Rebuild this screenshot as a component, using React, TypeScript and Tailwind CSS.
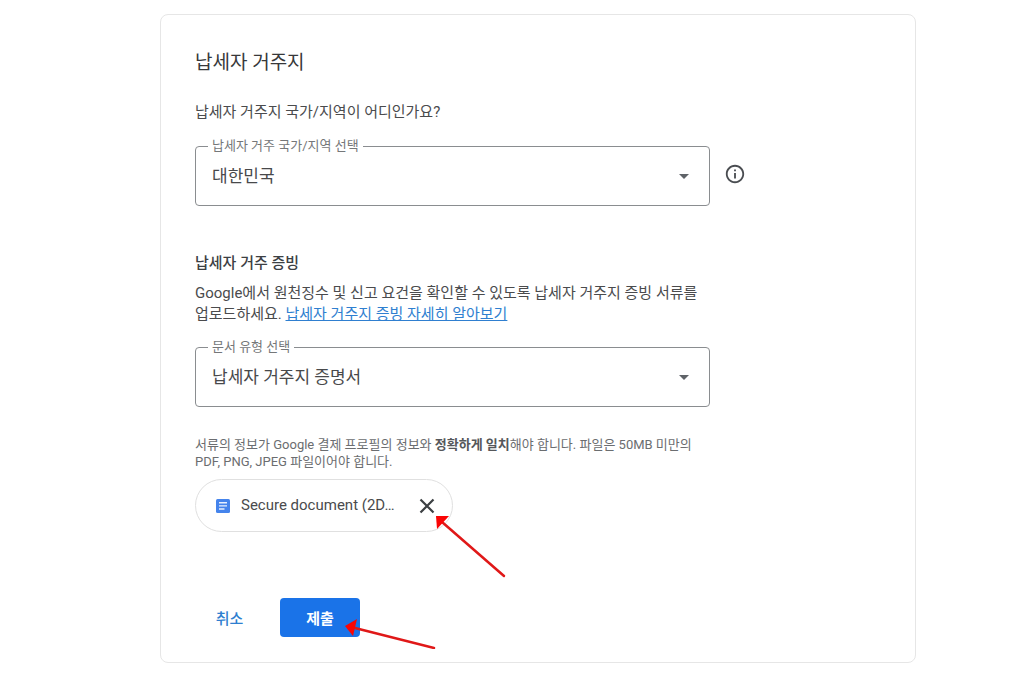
import { useState } from "react"
import type { ReactNode } from "react"

type SelectFieldProps = {
  id: string
  label: string
  options: string[]
}

function SelectField({ id, label, options }: SelectFieldProps) {
  const [value, setValue] = useState(options[0])

  return (
    <fieldset className="min-w-0 rounded border border-[#8a8d90]">
      <legend className="ml-3 px-1 text-[13px] leading-5 text-[#757779]">
        <label htmlFor={id}>{label}</label>
      </legend>
      <div className="grid h-[49px] pb-[9px]">
        <select
          id={id}
          value={value}
          onChange={(e) => setValue(e.target.value)}
          className="col-start-1 row-start-1 h-10 w-full appearance-none bg-transparent pt-0.5 pr-12 pl-4 text-[17px] text-[#48494b] outline-none"
        >
          {options.map((option) => (
            <option key={option}>{option}</option>
          ))}
        </select>
        <svg
          viewBox="0 0 10 5"
          className="pointer-events-none col-start-1 row-start-1 mr-5 h-[5px] w-[10px] self-center justify-self-end"
          aria-hidden="true"
        >
          <path d="M0 0h10L5 5z" fill="#5f6368" />
        </svg>
      </div>
    </fieldset>
  )
}

function FieldRow({ children }: { children: ReactNode }) {
  return <div className="flex items-center gap-[14px]">{children}</div>
}

function InfoIcon() {
  return (
    <svg viewBox="0 0 24 24" className="size-[22px]" fill="#4a4d51" aria-hidden="true">
      <path d="M11 7h2v2h-2zm0 4h2v6h-2zm1-9C6.480 2 2 6.480 2 12s4.480 10 10 10 10-4.480 10-10S17.520 2 12 2zm0 18c-4.410 0-8-3.590-8-8s3.590-8 8-8 8 3.590 8 8-3.590 8-8 8z" />
    </svg>
  )
}

function DocIcon() {
  return (
    <svg viewBox="0 0 14 14" className="size-[14px] shrink-0" aria-hidden="true">
      <rect width="14" height="14" rx="1.500" fill="#4584ec" />
      <path d="M3 3.800h8M3 6.900h8M3 10h5.500" stroke="#e8f0fe" strokeWidth="1.400" />
    </svg>
  )
}

export default function App() {
  return (
    <main className="bg-white pt-[14px] pr-[108px] pb-5 pl-40 font-[Roboto,'Noto_Sans_CJK_KR',sans-serif] text-[15px] text-[#4a4b4d]">
      <form
        onSubmit={(e) => e.preventDefault()}
        className="rounded-lg border border-[#e6e6e6] px-[34px] pt-[34px] pb-[25px]"
      >
        <h1 className="text-[19px] leading-7 text-[#37383a]">납세자 거주지</h1>
        <p className="mt-[25px] leading-5">납세자 거주지 국가/지역이 어디인가요?</p>

        <div className="mt-[14px]">
          <FieldRow>
            <div className="w-full max-w-[515px]">
              <SelectField id="country" label="납세자 거주 국가/지역 선택" options={["대한민국"]} />
            </div>
            <button type="button" aria-label="도움말" className="mt-[6px]">
              <InfoIcon />
            </button>
          </FieldRow>
        </div>

        <div className="max-w-[515px]">
          <h2 className="mt-[47px] leading-5 font-medium text-[#3c4043]">납세자 거주 증빙</h2>
          <p className="mt-[10px] leading-[21px]">
            Google에서 원천징수 및 신고 요건을 확인할 수 있도록 납세자 거주지 증빙 서류를 업로드하세요.{" "}
            <a href="#" className="text-[#2f7fd0] underline">
              납세자 거주지 증빙 자세히 알아보기
            </a>
          </p>

          <div className="mt-3">
            <SelectField id="doc-type" label="문서 유형 선택" options={["납세자 거주지 증명서"]} />
          </div>

          <p className="mt-[29px] text-[13px] leading-[17px] text-[#6b6d70]">
            서류의 정보가 Google 결제 프로필의 정보와 <b className="font-bold text-[#55575a]">정확하게 일치</b>
            해야 합니다. 파일은 50MB 미만의 PDF, PNG, JPEG 파일이어야 합니다.
          </p>
        </div>

        {/* Uploaded file */}
        <div className="relative mt-[9px] flex h-[53px] w-[258px] items-center rounded-full border border-[#e0e0e0] pr-[17px] pl-5">
          <DocIcon />
          <span className="ml-[11px] flex-1 whitespace-nowrap">Secure document (2D…</span>
          <button type="button" aria-label="파일 삭제">
            <svg viewBox="0 0 16 16" className="size-4" aria-hidden="true">
              <path d="M1.500 1.500l13 13M14.500 1.500l-13 13" stroke="#3c4043" strokeWidth="2.200" />
            </svg>
          </button>
          <svg
            viewBox="0 0 70 62"
            className="pointer-events-none absolute top-9 left-60 h-[62px] w-[70px]"
            aria-hidden="true"
          >
            <path d="M6 6l62 54" stroke="#e01818" strokeWidth="2.500" strokeLinecap="round" />
            <path d="M0 0l13 0L1 13z" fill="#fa0505" />
          </svg>
        </div>

        {/* Actions */}
        <div className="mt-[66px] flex items-center gap-4">
          <button type="button" className="h-[39px] w-[69px] pt-1 font-medium text-[#2f7fd0]">
            취소
          </button>
          <div className="relative">
            <button type="submit" className="h-[39px] w-20 rounded bg-[#1a73e8] pt-1 font-bold text-white">
              제출
            </button>
            <svg
              viewBox="0 0 92 30"
              className="pointer-events-none absolute top-[21px] left-[65px] h-[30px] w-[92px]"
              aria-hidden="true"
            >
              <path d="M6 8l83 21" stroke="#e01818" strokeWidth="2.500" strokeLinecap="round" />
              <path d="M0 7L12 0 8 17z" fill="#fa0505" />
            </svg>
          </div>
        </div>
      </form>
    </main>
  )
}
